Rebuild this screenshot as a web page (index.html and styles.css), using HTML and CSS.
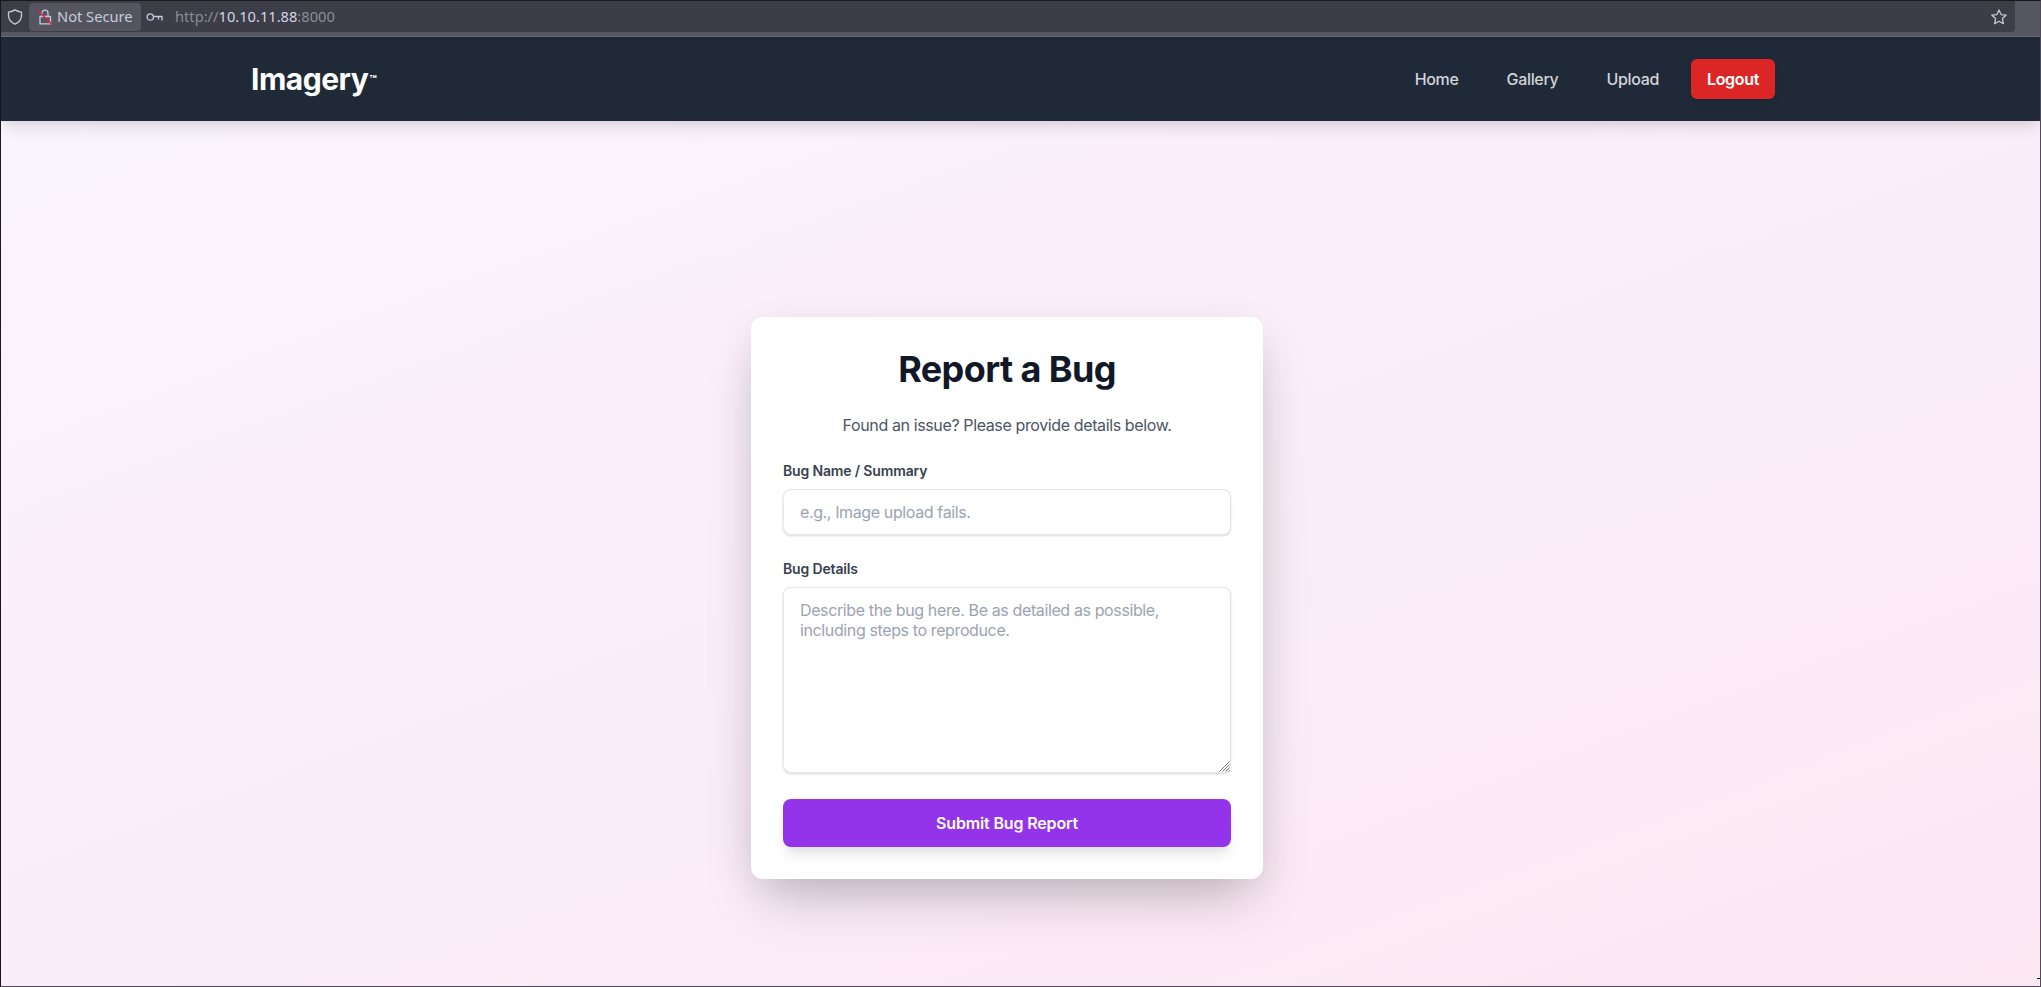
FILE: index.html
```
<!DOCTYPE html>
<html lang="en">
<head>
<meta charset="utf-8">
<title>Imagery</title>
<link rel="stylesheet" href="styles.css">
</head>
<body>
<div class="window">
  <div class="toolbar">
    <div class="urlbar">
      <svg class="shield" width="16" height="16" viewBox="0 0 16 16"><path d="M8 .9Q10.500 2.700 14.500 3.100V6.500C14.500 10.800 11.800 13.500 8 15.200 4.200 13.500 1.500 10.800 1.500 6.500V3.100Q5.500 2.700 8 .9z"/></svg>
      <div class="insecure">
        <svg width="16" height="16" viewBox="0 0 16 16"><path d="M3 7.500h10.500v7.400H3zM5 7.300V4.200a3 3 0 0 1 6 0v3.100"/><path class="slash" d="M1.500 2 14.500 15"/></svg>
        <span>Not Secure</span>
      </div>
      <svg class="key" width="17" height="16" viewBox="0 0 17 16"><circle cx="4.300" cy="8" r="3.200"/><path d="M7.500 7.500H16v3.500M12.500 7.500v2.500"/></svg>
      <div class="address">http://<b>10.10.11.88</b>:8000</div>
      <svg class="star" width="16" height="16" viewBox="0 0 16 16"><path d="m8 .9 2.100 4.700 5 .6-3.700 3.400 1 5.100L8 12.300l-4.400 2.400 1-5.100L.9 6.200l5-.6z"/></svg>
    </div>
  </div>
  <div class="page">
    <header class="site-header">
      <div class="logo">Imagery<span class="tm">™</span></div>
      <nav class="nav">
        <a>Home</a><a>Gallery</a><a>Upload</a><button class="logout">Logout</button>
      </nav>
    </header>
    <main class="main">
      <form class="card">
        <h1>Report a Bug</h1>
        <p class="intro">Found an issue? Please provide details below.</p>
        <label for="name">Bug Name / Summary</label>
        <input id="name" type="text" placeholder="e.g., Image upload fails.">
        <label for="details">Bug Details</label>
        <div class="details">
          <textarea id="details" placeholder="Describe the bug here. Be as detailed as possible, including steps to reproduce."></textarea>
          <svg class="grip" width="11" height="11" viewBox="0 0 11 11"><path d="M.5 10.500l10-10M3.500 10.500l7-7M6.500 10.500l4-4M9.500 10.500l1-1"/></svg>
        </div>
        <button class="submit" type="button">Submit Bug Report</button>
      </form>
    </main>
  </div>
  <svg class="cursor" width="5" height="12" viewBox="0 0 5 12"><path class="halo" d="M0 2h5v10H3V5H0z"/><path class="ink" d="M1 3h4v9H4V4H1z"/></svg>
</div>
</body>
</html>
```
FILE: styles.css
```
* { box-sizing: border-box; }
body { margin: 0; font: 16px/24px Inter, sans-serif; }
.window {
  position: relative;
  display: flex;
  flex-direction: column;
  width: 2041px;
  height: 987px;
  border: 1px solid #17181c;
  border-right-color: #54495a;
  border-bottom-color: #54495a;
  overflow: hidden;
}
.toolbar {
  height: 36px;
  padding-right: 25px;
  background: #565762;
  border-bottom: 1px solid #666772;
  flex: none;
}
.urlbar {
  display: flex;
  align-items: center;
  height: 31px;
  padding: 0 8px 0 6px;
  background: #3c3d47;
  border-radius: 0 0 4px 0;
  font: 14.67px/22px "Noto Sans", sans-serif;
  color: #8b8c97;
}
.urlbar svg { fill: none; stroke: #c6c9da; stroke-width: 1.3; stroke-linejoin: round; stroke-linecap: round; flex: none; }
.urlbar .slash { stroke: #e2204f; stroke-width: 1.5; }
.insecure {
  display: flex;
  align-items: center;
  gap: 4px;
  width: 112px;
  height: 28px;
  margin-left: 6px;
  padding-left: 8px;
  background: #54555f;
  border-radius: 4px;
  color: #c9ccdc;
  white-space: nowrap;
}
.insecure span, .address { padding-bottom: 2px; }
.key { margin-left: 5px; }
.address { margin-left: 12px; flex: 1; }
.address b { font-weight: 400; color: #d2d5e6; }
.page {
  flex: 1;
  display: flex;
  flex-direction: column;
  background: linear-gradient(160deg, #f9f5ff 0%, #fbf0fa 32%, #faedf7 55%, #fce7f3 100%);
}
.site-header {
  display: flex;
  align-items: center;
  justify-content: space-between;
  height: 84px;
  padding: 0 265px 0 250px;
  background: #202937;
  box-shadow: 0 10px 15px -3px rgba(0, 0, 0, .1), 0 4px 6px -2px rgba(0, 0, 0, .05);
}
.logo { display: flex; align-items: center; font-size: 30px; line-height: 36px; font-weight: 700; color: #fff; letter-spacing: -.5px; }
.tm { font-size: 12px; line-height: 12px; margin: 2px 0 0 1px; letter-spacing: 0; }
.nav { display: flex; gap: 16px; color: #d1d5db; font-weight: 500; letter-spacing: -.33px; }
.nav a, .logout { padding: 8px 16px; }
.logout {
  border: 0;
  border-radius: 6px;
  background: #dc2626;
  color: #fff;
  font: 600 16px/24px Inter, sans-serif;
  letter-spacing: -.33px;
  box-shadow: 0 4px 6px -1px rgba(0, 0, 0, .1);
}
.main { flex: 1; display: flex; justify-content: center; align-items: flex-start; padding: 196px 27px 0 0; }
.card {
  display: flex;
  flex-direction: column;
  width: 512px;
  height: 562px;
  padding: 32px;
  background: #fff;
  border-radius: 12px;
  box-shadow: 0 25px 50px -12px rgba(0, 0, 0, .25), 0 4px 40px rgba(0, 0, 0, .04);
}
h1 { margin: 0 0 24px; font-size: 36px; line-height: 40px; font-weight: 700; letter-spacing: -.6px; color: #111827; text-align: center; }
.intro { margin: 0 0 24px; color: #4b5563; text-align: center; letter-spacing: -.38px; }
label { margin-bottom: 8px; font-size: 14px; line-height: 20px; font-weight: 600; letter-spacing: -.15px; color: #374151; }
input, textarea {
  display: block;
  width: 100%;
  border: 1px solid #e5e7eb;
  border-radius: 8px;
  background: #fff;
  font: 16px/20px Inter, sans-serif;
  letter-spacing: -.38px;
  box-shadow: 0 1px 3px rgba(0, 0, 0, .1), 0 1px 2px rgba(0, 0, 0, .06);
}
input { height: 46px; margin-bottom: 24px; padding: 12px 16px; }
.details { position: relative; margin-bottom: 26px; }
textarea { height: 186px; padding: 12px 16px; resize: none; }
.grip { position: absolute; right: 1px; bottom: 1px; fill: none; stroke: #777; stroke-width: 1; }
::placeholder { color: #9ca3af; opacity: 1; }
.submit {
  height: 48px;
  border: 0;
  border-radius: 8px;
  background: #9333ea;
  color: #fff;
  font: 600 16px/24px Inter, sans-serif;
  letter-spacing: -.15px;
  box-shadow: 0 10px 15px -3px rgba(0, 0, 0, .1), 0 4px 6px -2px rgba(0, 0, 0, .05);
}
.cursor { position: absolute; right: -1px; bottom: -1px; }
.halo { fill: #fff; }
.ink { fill: #111; }
```
